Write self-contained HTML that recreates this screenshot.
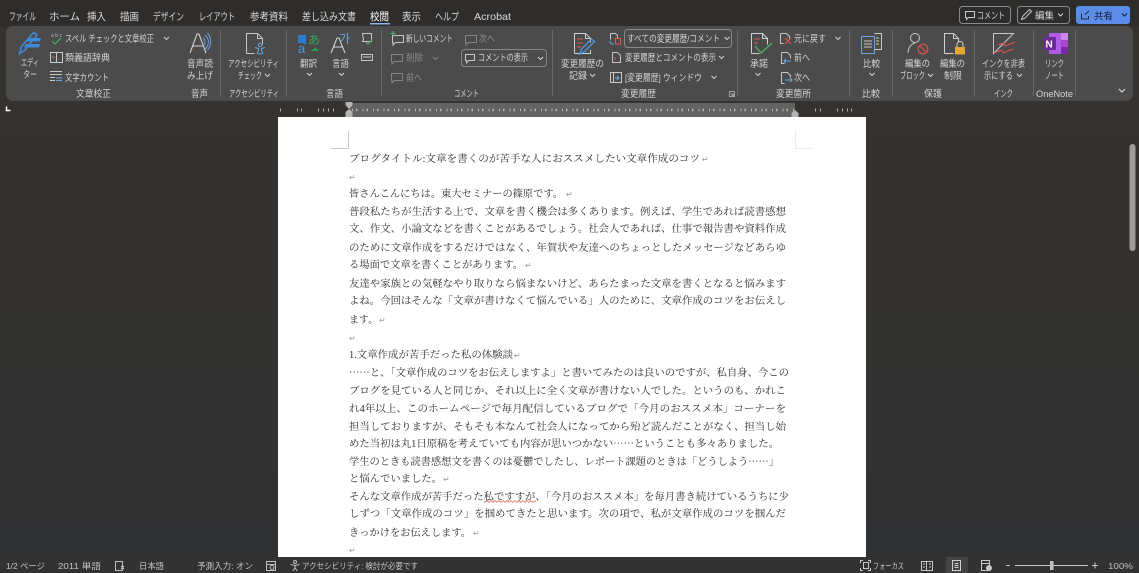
<!DOCTYPE html>
<html lang="ja"><head><meta charset="utf-8"><title>Word</title>
<style>
html,body{margin:0;padding:0;width:1139px;height:573px;overflow:hidden;background:#33312d}
svg{display:block}
text{white-space:pre}
.a{font:10.5px "Liberation Sans","Noto Sans CJK JP",sans-serif;fill:#d8d8d8}
.r{font:9.5px "Liberation Sans","Noto Sans CJK JP",sans-serif;fill:#d4d4d4}
.d{font:9.5px "Liberation Sans","Noto Sans CJK JP",sans-serif;fill:#8c8c8c}
.s{font:8.5px "Liberation Sans","Noto Sans CJK JP",sans-serif;fill:#c4c4c4}
.b{font:10.4px "Liberation Serif","Noto Serif CJK SC",serif;fill:#303030}
.e{font-family:"Noto Serif CJK SC",serif}
.p{font:8px "DejaVu Sans",sans-serif;fill:#999}
.ch{fill:none;stroke:#d0d0d0;stroke-width:1}
.ln{fill:none;stroke:#c8c8c8;stroke-width:1}
.dl{fill:none;stroke:#858585;stroke-width:1}
</style></head><body>
<svg width="1139" height="573" viewBox="0 0 1139 573" xmlns="http://www.w3.org/2000/svg">
<defs><linearGradient id="g" x1="0" y1="0" x2="0" y2="1"><stop offset="0" stop-color="#36332e"/><stop offset="1" stop-color="#303133"/></linearGradient></defs>
<rect width="1139" height="573" fill="url(#g)"/>
<rect width="1139" height="26" fill="#2e2d2b"/>

<!-- tabs -->
<text class="a" x="9" y="20" textLength="27" lengthAdjust="spacingAndGlyphs">ファイル</text>
<text class="a" x="49" y="20" textLength="31" lengthAdjust="spacing">ホーム</text>
<text class="a" x="87" y="20" textLength="19" lengthAdjust="spacingAndGlyphs">挿入</text>
<text class="a" x="120" y="20" textLength="19" lengthAdjust="spacingAndGlyphs">描画</text>
<text class="a" x="153" y="20" textLength="31" lengthAdjust="spacingAndGlyphs">デザイン</text>
<text class="a" x="199" y="20" textLength="36" lengthAdjust="spacingAndGlyphs">レイアウト</text>
<text class="a" x="250" y="20" textLength="38" lengthAdjust="spacingAndGlyphs">参考資料</text>
<text class="a" x="302" y="20" textLength="54" lengthAdjust="spacingAndGlyphs">差し込み文書</text>
<text class="a" x="370" y="20" textLength="19" lengthAdjust="spacingAndGlyphs" style="fill:#fff">校閲</text>
<rect x="370" y="23" width="20" height="1.5" fill="#8fb4ea"/>
<text class="a" x="402" y="20" textLength="19" lengthAdjust="spacingAndGlyphs">表示</text>
<text class="a" x="435" y="20" textLength="24" lengthAdjust="spacingAndGlyphs">ヘルプ</text>
<text class="a" x="474" y="20" textLength="37" lengthAdjust="spacingAndGlyphs">Acrobat</text>

<!-- top right buttons -->
<rect x="959.5" y="6.5" width="51" height="17" rx="3" fill="none" stroke="#8a8a8a"/>
<path class="ln" d="M965.500 11.500h9v6h-6l-2 2v-2h-1z"/>
<text class="r" x="977" y="19" textLength="28" lengthAdjust="spacingAndGlyphs">コメント</text>
<rect x="1017.5" y="6.5" width="52" height="17" rx="3" fill="none" stroke="#8a8a8a"/>
<path class="ln" d="M1021.500 19.500l1-3 7-7 2 2-7 7z"/>
<text class="r" x="1035" y="19" textLength="19" lengthAdjust="spacingAndGlyphs">編集</text>
<path class="ch" d="M1058 13.500l2.500 2.500 2.500-2.500"/>
<rect x="1076" y="6" width="54" height="18" rx="3" fill="#5b8de8"/>
<path d="M1081.500 13.500v5.500h7v-3M1085 14.500l4-3.500" fill="none" stroke="#1c2a44"/>
<text class="r" x="1094" y="19.500" textLength="19" lengthAdjust="spacingAndGlyphs" style="fill:#10182a">共有</text>
<path d="M1122 13.500l2.500 2.500 2.500-2.500" fill="none" stroke="#10182a"/>

<!-- ribbon -->
<rect x="6" y="26" width="1127" height="75" rx="7" fill="#4b4b4b"/>
<g stroke="#666" stroke-width="1">
<path d="M220.500 30v66M286.500 30v66M381.500 30v66M552.500 30v66M737.500 30v66M849.500 30v66M892.500 30v66M974.500 30v66M1033.500 30v66M1075.500 30v66"/>
</g>

<!-- Editor -->
<path d="M19.500 53.500l2-7 12-14 3.500 2.500-12 15z" fill="none" stroke="#3f8ad8" stroke-width="1.500"/>
<path d="M28 38h13l-1 3.500H27zM25.500 44h14.500l-1 3.500H24z" fill="#3f8ad8"/>
<text class="r" x="21" y="66" textLength="18" lengthAdjust="spacingAndGlyphs">エディ</text>
<text class="r" x="23" y="78" textLength="14" lengthAdjust="spacingAndGlyphs">ター</text>
<text x="51" y="37" style="font:5px 'Liberation Sans',sans-serif;fill:#bbb" textLength="11">abc</text>
<path d="M52 41l3 3 6-6" fill="none" stroke="#4fb56b"/>
<text class="r" x="65" y="42" textLength="89" lengthAdjust="spacingAndGlyphs">スペル チェックと文章校正</text>
<path class="ch" d="M164 37l2.500 2.500 2.500-2.500"/>
<path class="ln" d="M50.500 52.500h12v10h-12zM56.500 52.500v10"/><path d="M52 57h3" stroke="#d66"/>
<text class="r" x="65" y="61" textLength="45" lengthAdjust="spacingAndGlyphs">類義語辞典</text>
<path class="ln" d="M50 71.500h12M50 74.500h12M50 77.500h5M50 80.500h5"/><path d="M56 78h6M56 80.500h6" stroke="#6aa5e0"/>
<text class="r" x="65" y="81" textLength="44" lengthAdjust="spacingAndGlyphs">文字カウント</text>
<text class="r" x="76" y="97" textLength="35" lengthAdjust="spacingAndGlyphs">文章校正</text>

<!-- Read aloud -->
<path d="M190 53l7-19h2l7 19M193 46h10" fill="none" stroke="#d4d4d4" stroke-width="1.100"/>
<path d="M203 38a5 5 0 0 1 0 8M205 35a9 9 0 0 1 0 14M207.500 33a13 13 0 0 1 0 17" fill="none" stroke="#6aa5e0"/>
<text class="r" x="187" y="67" textLength="26" lengthAdjust="spacingAndGlyphs">音声読</text>
<text class="r" x="187" y="79" textLength="26" lengthAdjust="spacingAndGlyphs">み上げ</text>
<text class="r" x="191" y="97" textLength="17" lengthAdjust="spacingAndGlyphs">音声</text>

<!-- Accessibility -->
<path d="M246.500 53.500v-20h11l5 5v6M257.500 33.500v5h5M246.500 53.500h8" fill="none" stroke="#c8c8c8"/>
<circle cx="260" cy="45" r="1.700" fill="none" stroke="#6aa5e0"/>
<path d="M255 47.500l3.500 1v2l-1.500 3.500M265 47.500l-3.500 1v2l1.500 3.500M258 54h4" fill="none" stroke="#6aa5e0"/>
<text class="r" x="228" y="67" textLength="51" lengthAdjust="spacingAndGlyphs">アクセシビリティ</text>
<text class="r" x="238" y="79" textLength="24" lengthAdjust="spacingAndGlyphs">チェック</text>
<path class="ch" d="M265 74l2.500 2.500 2.500-2.500"/>
<text class="r" x="229" y="97" textLength="50" lengthAdjust="spacingAndGlyphs">アクセシビリティ</text>

<!-- Language -->
<path d="M298 35v8h5l3 2v-10z" fill="#2b7cd3"/>
<text x="298" y="53" style="font:13px 'Liberation Sans',sans-serif;fill:#4a9be8">a</text>
<text x="308" y="44" style="font:12px 'Noto Sans CJK JP',sans-serif;fill:#3aa35a">あ</text>
<path d="M311 51h8l-3.500-3.500zM311 51l3 2" fill="#2ca24e"/>
<text class="r" x="300" y="67" textLength="17" lengthAdjust="spacingAndGlyphs">翻訳</text>
<path class="ch" d="M307 73l2.500 2.500 2.500-2.500"/>
<path d="M331 53l6-15h2l6 15M333.500 47h9" fill="none" stroke="#d4d4d4" stroke-width="1.100"/>
<text x="339" y="43" style="font:12px 'Noto Sans CJK KR',sans-serif;fill:#6aa5e0">가</text>
<text class="r" x="332" y="67" textLength="17" lengthAdjust="spacingAndGlyphs">言語</text>
<path class="ch" d="M339 73l2.500 2.500 2.500-2.500"/>
<path class="ln" d="M362.500 33.500h9v8h-9l1-2z"/><path d="M366 42l2 2 4-4" fill="none" stroke="#4fb56b"/>
<path class="ln" d="M361.500 54.500h11v6h-11zM363 57h8"/>
<text class="r" x="326" y="97" textLength="17" lengthAdjust="spacingAndGlyphs">言語</text>

<!-- Comments -->
<path class="ln" d="M392.500 35.500h11v7h-8l-2.500 2.500v-2.500h-.5z"/><path d="M393 31v5M390.500 33.500h5" stroke="#4fb56b"/>
<text class="r" x="406" y="42" textLength="47" lengthAdjust="spacingAndGlyphs">新しいコメント</text>
<path class="dl" d="M465.500 35.500h11v7h-8l-2.500 2.500v-2.500h-.5z"/>
<text class="d" x="479" y="42" textLength="16" lengthAdjust="spacingAndGlyphs">次へ</text>
<path class="dl" d="M391.500 54.500h11v7h-8l-2.500 2.500v-2.500h-.5z"/>
<text class="d" x="406" y="61" textLength="17" lengthAdjust="spacingAndGlyphs">削除</text>
<path class="dl" d="M433 57l2.500 2.500 2.500-2.500"/>
<path class="dl" d="M391.500 73.500h11v7h-8l-2.500 2.500v-2.500h-.5z"/>
<text class="d" x="406" y="81" textLength="16" lengthAdjust="spacingAndGlyphs">前へ</text>
<rect x="461.500" y="49.500" width="85" height="17" rx="3" fill="none" stroke="#858585"/>
<path class="ln" d="M465.500 54.500h9v6h-6l-2 2.500v-2.500h-1z"/>
<text class="r" x="478" y="61" textLength="50" lengthAdjust="spacingAndGlyphs">コメントの表示</text>
<path class="ch" d="M538 57l2.500 2.500 2.500-2.500"/>
<text class="r" x="454" y="97" textLength="25" lengthAdjust="spacingAndGlyphs">コメント</text>

<!-- Track changes -->
<path d="M574.500 53.500v-20h11l5 5v4M585.500 33.500v5h5M590.500 50v3.500h-16" fill="none" stroke="#d0d0d0"/>
<path d="M577 39h6M577 43h6M577 47h4" stroke="#e05a4e"/>
<path d="M580 54l1.500-5 10-10 3 2.500-10 10z" fill="none" stroke="#4a9be8" stroke-width="1.300"/>
<text class="r" x="561" y="67" textLength="43" lengthAdjust="spacingAndGlyphs">変更履歴の</text>
<text class="r" x="569" y="79" textLength="18" lengthAdjust="spacingAndGlyphs">記録</text>
<path class="ch" d="M590 74l2.500 2.500 2.500-2.500"/>
<path class="ln" d="M610.500 33.500h5l2 2v3M610.500 33.500v6"/><path d="M610 41c0 3 2 3 4 3" fill="none" stroke="#6aa5e0"/><path d="M615.500 38.500h5v5.500h-5z" fill="none" stroke="#e05a4e"/>
<rect x="624.500" y="29.500" width="107" height="18" rx="3" fill="none" stroke="#8a8a8a"/>
<text class="r" x="627" y="42" textLength="93" lengthAdjust="spacingAndGlyphs">すべての変更履歴/コメント</text>
<path class="ch" d="M724.500 37l2.500 2.500 2.500-2.500"/>
<path class="ln" d="M612.500 52.500h5l3 3v7h-8z"/><path d="M615 57v3" stroke="#e05a4e"/>
<text class="r" x="625" y="61" textLength="91" lengthAdjust="spacingAndGlyphs">変更履歴とコメントの表示</text>
<path class="ch" d="M719 56l2.500 2.500 2.500-2.500"/>
<path class="ln" d="M610.500 72.500h11v10h-11zM613.500 72.500v10"/><path d="M615 78h4M617 76l2 2-2 2" fill="none" stroke="#6aa5e0"/>
<text class="r" x="625" y="81" textLength="77" lengthAdjust="spacingAndGlyphs">[変更履歴] ウィンドウ</text>
<path class="ch" d="M711.500 76l2.500 2.500 2.500-2.500"/>
<text class="r" x="621" y="97" textLength="35" lengthAdjust="spacingAndGlyphs">変更履歴</text>
<path d="M729.500 91.500h5v5h-5zM731 93l2.500 2.500M733.500 93.500v2h-2" fill="none" stroke="#a0a0a0"/>

<!-- Changes -->
<path d="M751.500 53.500v-20h11l5 5v6M762.500 33.500v5h5M751.500 53.500h8" fill="none" stroke="#d0d0d0"/>
<path d="M754 39h6M754 43h4" stroke="#e05a4e"/>
<path d="M755 46l6 7 11-10" fill="none" stroke="#4fb56b" stroke-width="1.200"/>
<text class="r" x="750" y="67" textLength="18" lengthAdjust="spacingAndGlyphs">承諾</text>
<path class="ch" d="M755.500 73l2.500 2.500 2.500-2.500"/>
<path class="ln" d="M780.500 33.500h6l3 3v2M780.500 33.500v10h3"/><path d="M785 38l6 6M791 38l-6 6" stroke="#e05a4e"/>
<text class="r" x="794" y="42" textLength="32" lengthAdjust="spacingAndGlyphs">元に戻す</text>
<path class="ch" d="M835.500 37l2.500 2.500 2.500-2.500"/>
<path class="ln" d="M781.500 52.500h6l3 3v3M781.500 52.500v11h3"/><path d="M791 61h-7M786 59l-2 2 2 2" fill="none" stroke="#6aa5e0"/>
<text class="r" x="794" y="61" textLength="16" lengthAdjust="spacingAndGlyphs">前へ</text>
<path class="ln" d="M781.500 72.500h6l3 3v2M781.500 72.500v11h3"/><path d="M785 80h7M790 78l2 2-2 2" fill="none" stroke="#6aa5e0"/>
<text class="r" x="794" y="81" textLength="16" lengthAdjust="spacingAndGlyphs">次へ</text>
<text class="r" x="776" y="97" textLength="35" lengthAdjust="spacingAndGlyphs">変更箇所</text>

<!-- Compare -->
<path d="M861.500 36.500h13v17h-13z" fill="none" stroke="#6aa5e0"/>
<path d="M874.500 33.500h7v16h-7" fill="none" stroke="#c8c8c8"/>
<path class="ln" d="M864 41h8M864 44h8M864 47h8M876 38h3M876 41h3M876 44h3"/>
<text class="r" x="863" y="67" textLength="17" lengthAdjust="spacingAndGlyphs">比較</text>
<path class="ch" d="M869.500 73l2.500 2.500 2.500-2.500"/>
<text class="r" x="862" y="97" textLength="18" lengthAdjust="spacingAndGlyphs">比較</text>

<!-- Protect -->
<circle cx="915" cy="38" r="4.500" fill="none" stroke="#c8c8c8"/>
<path d="M908 53c0-5 3-9 7-10" fill="none" stroke="#c8c8c8"/>
<circle cx="923" cy="49" r="4.800" fill="none" stroke="#e5534b" stroke-width="1.200"/><path d="M920 46l6 6" stroke="#e5534b" stroke-width="1.200"/>
<text class="r" x="905" y="67" textLength="25" lengthAdjust="spacingAndGlyphs">編集の</text>
<text class="r" x="900" y="79" textLength="25" lengthAdjust="spacingAndGlyphs">ブロック</text>
<path class="ch" d="M928 74l2.500 2.500 2.500-2.500"/>
<path d="M944.500 53.500v-20h9l5 5v4M953.500 33.500v5h5M944.500 53.500h9" fill="none" stroke="#d0d0d0"/>
<rect x="955" y="47" width="10" height="7.500" fill="#e5a637"/><path d="M957 47v-2.500a3 3 0 0 1 6 0v2.500" fill="none" stroke="#d0d0d0"/>
<text class="r" x="940" y="67" textLength="25" lengthAdjust="spacingAndGlyphs">編集の</text>
<text class="r" x="944" y="79" textLength="18" lengthAdjust="spacingAndGlyphs">制限</text>
<text class="r" x="924" y="97" textLength="18" lengthAdjust="spacingAndGlyphs">保護</text>

<!-- Ink -->
<path d="M993.500 53.500v-20h20z" fill="none" stroke="#c8c8c8"/>
<path d="M998 45l6-2 1 3 10-4M994 53l8-3 1 3 10-4" fill="none" stroke="#e5534b"/>
<text class="r" x="982" y="67" textLength="43" lengthAdjust="spacingAndGlyphs">インクを非表</text>
<text class="r" x="984" y="79" textLength="29" lengthAdjust="spacingAndGlyphs">示にする</text>
<path class="ch" d="M1017 74l2.500 2.500 2.500-2.500"/>
<text class="r" x="994" y="97" textLength="19" lengthAdjust="spacingAndGlyphs">インク</text>

<!-- OneNote -->
<rect x="1049" y="33" width="19" height="21" rx="1" fill="#b05ce8"/>
<rect x="1061" y="33" width="7" height="7" fill="#cf85ef"/><rect x="1061" y="40" width="7" height="7" fill="#a848d0"/><rect x="1061" y="47" width="7" height="7" fill="#7a2aa6"/>
<rect x="1043" y="37" width="13" height="13" rx="1" fill="#6a2a9a"/>
<text x="1045.500" y="47.500" style="font:bold 10px 'Liberation Sans',sans-serif;fill:#fff">N</text>
<text class="r" x="1045" y="67" textLength="19" lengthAdjust="spacingAndGlyphs">リンク</text>
<text class="r" x="1045" y="79" textLength="19" lengthAdjust="spacingAndGlyphs">ノート</text>
<text class="r" x="1036" y="97" textLength="37" lengthAdjust="spacingAndGlyphs">OneNote</text>
<path d="M1119 89l3 3 3-3" fill="none" stroke="#e0e0e0" stroke-width="1.100"/>

<!-- ruler -->
<path d="M6.500 106.500v4h4" fill="none" stroke="#fff" stroke-width="1.500"/>
<rect x="349" y="103" width="446" height="14" fill="#636363"/>
<path d="M352 110H795" stroke="#b8b8b8" stroke-width="2.500" stroke-dasharray="1 3 1.500 5"/>
<path d="M280.500 108.500v3M297.500 108.500v3M301.500 108.500v3M318.500 108.500v3M323.500 108.500v3M328.500 108.500v3M333.500 108.500v3M815.500 108.500v3M820.500 108.500v3M837.500 108.500v3M842.500 108.500v3M847.500 108.500v3M851.500 108.500v3" stroke="#b0b0b0"/>
<path d="M345.500 102h7v3l-3.500 4-3.500-4z" fill="#b4b4b4"/>
<path d="M349 109l3.500 3v6h-7v-6z" fill="#b4b4b4"/>
<path d="M795 110l3.500 3v4h-7v-4z" fill="#b4b4b4"/>

<!-- scrollbar -->
<rect x="1129.500" y="144" width="6" height="107" rx="3" fill="#9c9c9c"/>

<!-- page -->
<rect x="278" y="117" width="588" height="440" fill="#fff"/>
<path d="M348.500 131v17.500H331" fill="none" stroke="#c8c8c8"/>
<path d="M795.500 131v17.500H812" fill="none" stroke="#ececec"/>

<text class="b" x="349" y="162" textLength="351" lengthAdjust="spacingAndGlyphs">ブログタイトル:文章を書くのが苦手な人におススメしたい文章作成のコツ</text><text class="p" x="702" y="162">↵</text>
<text class="p" x="349" y="180">↵</text>
<text class="b" x="349" y="197" textLength="214" lengthAdjust="spacingAndGlyphs">皆さんこんにちは。東大セミナーの篠原です。</text><text class="p" x="566" y="197">↵</text>
<text class="b" x="349" y="215" textLength="437" lengthAdjust="spacingAndGlyphs">普段私たちが生活する上で、文章を書く機会は多くあります。例えば、学生であれば読書感想</text>
<text class="b" x="349" y="232" textLength="437" lengthAdjust="spacingAndGlyphs">文、作文、小論文などを書くことがあるでしょう。社会人であれば、仕事で報告書や資料作成</text>
<text class="b" x="349" y="251" textLength="437" lengthAdjust="spacingAndGlyphs">のために文章作成をするだけではなく、年賀状や友達へのちょっとしたメッセージなどあらゆ</text>
<text class="b" x="349" y="268" textLength="174" lengthAdjust="spacingAndGlyphs">る場面で文章を書くことがあります。</text><text class="p" x="525" y="268">↵</text>
<text class="b" x="349" y="287" textLength="437" lengthAdjust="spacingAndGlyphs">友達や家族との気軽なやり取りなら悩まないけど、あらたまった文章を書くとなると悩みます</text>
<text class="b" x="349" y="304" textLength="437" lengthAdjust="spacingAndGlyphs">よね。今回はそんな「文章が書けなくて悩んでいる」人のために、文章作成のコツをお伝えし</text>
<text class="b" x="349" y="323" textLength="29" lengthAdjust="spacingAndGlyphs">ます。</text><text class="p" x="379" y="323">↵</text>
<text class="p" x="349" y="341">↵</text>
<text class="b" x="349" y="358" textLength="164" lengthAdjust="spacingAndGlyphs">1.文章作成が苦手だった私の体験談</text><text class="p" x="514" y="358">↵</text>
<text class="b" x="349" y="376" textLength="440" lengthAdjust="spacingAndGlyphs"><tspan class="e">……</tspan>と、「文章作成のコツをお伝えしますよ」と書いてみたのは良いのですが、私自身、今この</text>
<text class="b" x="349" y="394" textLength="437" lengthAdjust="spacingAndGlyphs">ブログを見ている人と同じか、それ以上に全く文章が書けない人でした。というのも、かれこ</text>
<text class="b" x="349" y="412" textLength="437" lengthAdjust="spacingAndGlyphs">れ4年以上、このホームページで毎月配信しているブログで「今月のおススメ本」コーナーを</text>
<text class="b" x="349" y="430" textLength="437" lengthAdjust="spacingAndGlyphs">担当しておりますが、そもそも本なんて社会人になってから殆ど読んだことがなく、担当し始</text>
<text class="b" x="349" y="447" textLength="430" lengthAdjust="spacingAndGlyphs">めた当初は丸1日原稿を考えていても内容が思いつかない<tspan class="e">……</tspan>ということも多々ありました。</text>
<text class="b" x="349" y="465" textLength="430" lengthAdjust="spacingAndGlyphs">学生のときも読書感想文を書くのは憂鬱でしたし、レポート課題のときは「どうしよう<tspan class="e">……</tspan>」</text>
<text class="b" x="349" y="482" textLength="93" lengthAdjust="spacingAndGlyphs">と悩んでいました。</text><text class="p" x="443" y="482">↵</text>
<text class="b" x="349" y="500" textLength="440" lengthAdjust="spacingAndGlyphs">そんな文章作成が苦手だった私ですすが、「今月のおススメ本」を毎月書き続けているうちに少</text>
<path d="M484 501.500q1 1.500 2 0t2 0t2 0t2 0t2 0t2 0t2 0t2 0t2 0t2 0t2 0t2 0t2 0t2 0t2 0t2 0t2 0t2 0t2 0t2 0t2 0t2 0t2 0t2 0t2 0t2 0" fill="none" stroke="#e5534b" stroke-width=".7"/>
<text class="b" x="349" y="517" textLength="437" lengthAdjust="spacingAndGlyphs">しずつ「文章作成のコツ」を掴めてきたと思います。次の項で、私が文章作成のコツを掴んだ</text>
<text class="b" x="349" y="536" textLength="122" lengthAdjust="spacingAndGlyphs">きっかけをお伝えします。</text><text class="p" x="473" y="536">↵</text>
<text class="p" x="349" y="553">↵</text>

<!-- status bar -->
<rect y="557" width="1139" height="16" fill="#323232"/>
<text class="s" x="6" y="569" textLength="39" lengthAdjust="spacingAndGlyphs">1/2 ページ</text>
<text class="s" x="58" y="569" textLength="43" lengthAdjust="spacingAndGlyphs">2011 単語</text>
<path d="M115.500 561.500h7v9h-7zM121 566l3 3M124 566l-3 3" fill="none" stroke="#c0c0c0"/>
<text class="s" x="139" y="569" textLength="25" lengthAdjust="spacingAndGlyphs">日本語</text>
<text class="s" x="197" y="569" textLength="56" lengthAdjust="spacingAndGlyphs">予測入力: オン</text>
<path d="M266.500 561.500h9v9h-9zM266.500 564.500h9" fill="none" stroke="#c0c0c0"/><circle cx="272" cy="567.500" r="2" fill="none" stroke="#c0c0c0"/>
<circle cx="295" cy="562" r="1.500" fill="none" stroke="#c0c0c0"/><path d="M290.500 564.500l4.500 1 4.500-1M295 565.500v2l-2 3.500M295 567.500l2 3.500" fill="none" stroke="#c0c0c0"/>
<text class="s" x="302" y="569" textLength="116" lengthAdjust="spacingAndGlyphs">アクセシビリティ: 検討が必要です</text>

<path d="M860.500 563v-2.500h2.500M868 560.500h2.500v2.500M870.500 568v2.500H868M863 570.500h-2.500V568M863.500 562.500h5v6h-5z" fill="none" stroke="#c8c8c8"/>
<text class="s" x="873" y="569" textLength="31" lengthAdjust="spacingAndGlyphs">フォーカス</text>
<path d="M921.500 561.500h5v9h-5zM927 561.500h5.500v9H927M923 564h2M923 567h2M929 564h2M929 567h2" fill="none" stroke="#c8c8c8"/>
<rect x="946" y="557" width="22" height="16" fill="#444"/>
<path d="M952.500 560.500h8v10h-8zM954.500 563.500h4M954.500 565.500h4M954.500 567.500h4" fill="none" stroke="#d0d0d0"/>
<path d="M981.500 560.500h8v10h-8zM981.500 563.500h8" fill="none" stroke="#c8c8c8"/><circle cx="989" cy="568" r="3" fill="#c8c8c8"/>
<path d="M1006 565.500h4M1015 565.500h73M1092 565.500h6M1095 562.500v6" stroke="#c8c8c8"/>
<rect x="1050" y="561" width="3.500" height="9" fill="#c0c0c0"/>
<text class="s" x="1108" y="569" textLength="25" lengthAdjust="spacingAndGlyphs">100%</text>
</svg>
</body></html>
